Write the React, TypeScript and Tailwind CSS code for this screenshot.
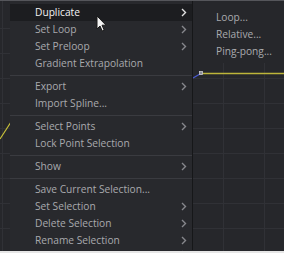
import React from 'react';

type Item = { label: string; sub?: boolean; active?: boolean } | 'sep';

const items: Item[] = [
  { label: 'Duplicate', sub: true, active: true },
  { label: 'Set Loop', sub: true },
  { label: 'Set Preloop', sub: true },
  { label: 'Gradient Extrapolation' },
  'sep',
  { label: 'Export', sub: true },
  { label: 'Import Spline...' },
  'sep',
  { label: 'Select Points', sub: true },
  { label: 'Lock Point Selection' },
  'sep',
  { label: 'Show', sub: true },
  'sep',
  { label: 'Save Current Selection...' },
  { label: 'Set Selection', sub: true },
  { label: 'Delete Selection', sub: true },
  { label: 'Rename Selection', sub: true },
];

function Chevron() {
  return (
    <svg width="6" height="9" viewBox="0 0 6 9" className="shrink-0">
      <path d="M1 1l3.5 3.5L1 8" fill="none" stroke="currentColor" strokeWidth="1.4" />
    </svg>
  );
}

function GraphCanvas() {
  const hLines = [27, 52, 77, 102, 127, 152, 177, 202, 227];
  const vLines = [2, 182, 223, 264];
  return (
    <svg width="284" height="253" className="absolute inset-0">
      {hLines.map((y) => (
        <line key={y} x1="0" x2="284" y1={y + 0.5} y2={y + 0.5} stroke="#303136" />
      ))}
      {vLines.map((x) => (
        <line key={x} x1={x + 0.5} x2={x + 0.5} y1="0" y2="253" stroke="#303136" />
      ))}
      <line x1="0" y1="138" x2="11" y2="121" stroke="#c9c23a" strokeWidth="1.2" />
      <line x1="201" y1="72.5" x2="284" y2="72.5" stroke="#bdb53a" strokeWidth="1.4" />
      <line x1="193" y1="77" x2="200" y2="73" stroke="#4a5ad0" strokeWidth="1.2" />
      <rect x="199.5" y="70.5" width="3" height="3" fill="#8a8c98" stroke="#c8c9d2" strokeWidth="0.8" />
    </svg>
  );
}

function Cursor() {
  return (
    <svg width="12" height="18" viewBox="0 0 12 18" className="absolute left-[96px] top-[14px]">
      <path
        d="M1 1v13l3-3 2.2 5 2-0.9-2.2-4.9H10z"
        fill="#f4f4f4"
        stroke="#1a1a1a"
        strokeWidth="1"
        strokeLinejoin="round"
      />
    </svg>
  );
}

export default function App() {
  return (
    <div
      className="relative w-[284px] h-[253px] overflow-hidden bg-[#26272b] border-t border-[#55565b]"
      style={{ fontFamily: '"Open Sans", sans-serif' }}
    >
      <GraphCanvas />

      {/* context menu + submenu */}
      <div className="absolute left-[10px] top-0 flex items-start text-[10.2px] text-[#a9aaae]">
        <div className="w-[183px] h-[249px] bg-[#28292d] border-r border-[#161719] pt-[3px]">
          {items.map((it, i) =>
            it === 'sep' ? (
              <div key={i} className="h-[6px] flex items-center">
                <div className="h-px w-full bg-[#3a3b40]" />
              </div>
            ) : (
              <div
                key={i}
                className={`h-[17px] flex items-center justify-between pl-[25px] pr-[5px] ${
                  it.active ? 'bg-[#1c1d20] text-[#f2f2f2]' : ''
                }`}
              >
                <span className="leading-none whitespace-nowrap">{it.label}</span>
                {it.sub && (
                  <span className={it.active ? 'text-[#e0e0e0]' : 'text-[#86878c]'}>
                    <Chevron />
                  </span>
                )}
              </div>
            )
          )}
        </div>

        <div className="w-[91px] h-[62px] bg-[#26272b] pt-[8px]">
          {['Loop...', 'Relative...', 'Ping-pong...'].map((t) => (
            <div key={t} className="h-[17px] flex items-center pl-[23px] whitespace-nowrap leading-none">
              {t}
            </div>
          ))}
        </div>
      </div>

      <Cursor />

      <div className="absolute left-0 right-0 bottom-0 h-[2px] bg-[#e6e6e6]" />
    </div>
  );
}
